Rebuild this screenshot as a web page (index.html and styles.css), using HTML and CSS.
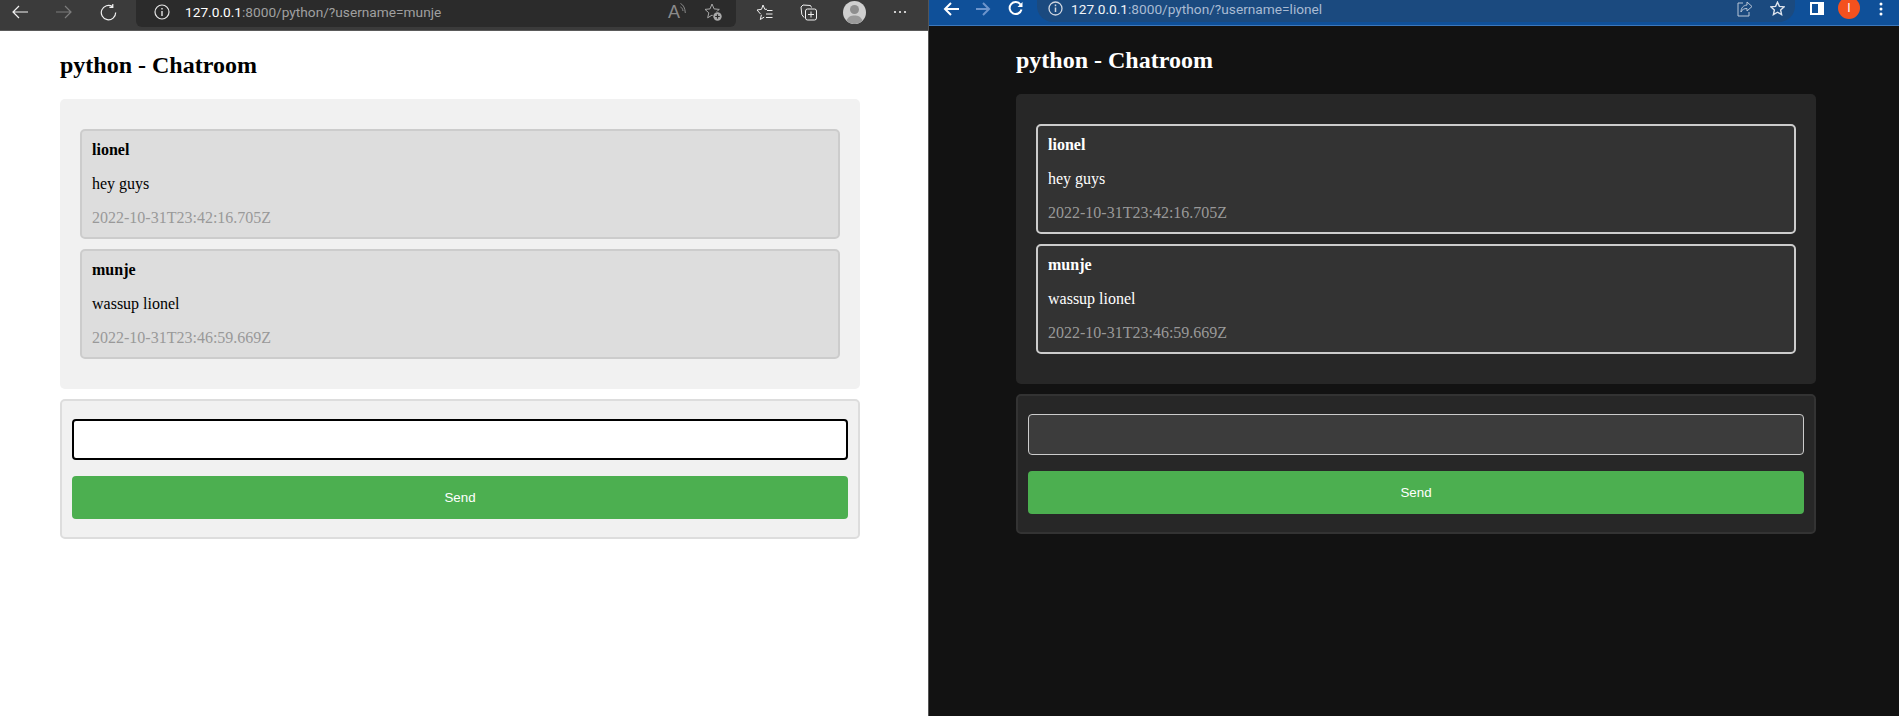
FILE: index.html
```html
<!DOCTYPE html><html><head><meta charset="utf-8">
<title>python - Chatroom</title>
<link rel="stylesheet" href="styles.css">
</head>
<body>

<div class="screen">

<!-- left window, light -->
<div class="pane light">
	<div class="bar">
		<div class="tool"><svg width="16" height="14" viewBox="0 0 16 14"><path d="M16 7H1M7 1L1 7l6 6" fill="none" stroke="#f2f2f2" stroke-width="1.2"/></svg></div>
		<div class="tool"><svg width="16" height="14" viewBox="0 0 16 14"><path d="M0 7h15M9 1l6 6-6 6" fill="none" stroke="#7d7d7d" stroke-width="1.2"/></svg></div>
		<div class="tool"><svg width="17" height="17" viewBox="0 0 17 17"><path d="M12.5 2.600A7.200 7.200 0 1 0 15.700 8.500M12.800 0v3.400H9.400" fill="none" stroke="#f0f0f0" stroke-width="1.2"/></svg></div>
		<div class="addr">
			<div class="info"><svg width="16" height="16" viewBox="0 0 16 16"><circle cx="8" cy="8" r="7" fill="none" stroke="#e6e6e6" stroke-width="1.2"/><path d="M8 7v5M8 4v1.600" stroke="#e6e6e6" stroke-width="1.400"/></svg></div>
			<div class="url"><b>127.0.0.1</b>:8000/python/?username=munje</div>
			<div class="addr-tools">
				<div class="mini"><span class="aloud">A</span><svg class="waves" width="6" height="11" viewBox="0 0 6 11"><path d="M0.500 0.500C3.500 2 5 5 5.300 10M0.500 4C2 4.800 2.800 6 3 8" fill="none" stroke="#8a8a8a"/></svg></div>
				<div class="mini"><svg width="18" height="18" viewBox="0 0 18 18"><path d="M8 1l2.100 4.900 5.200.5-3.900 3.400 1.100 5-4.500-2.700-4.300 2.700 1.100-5L1 6.400l5-.5z" fill="none" stroke="#a8a8a8" stroke-linejoin="round"/><circle cx="13.500" cy="13.500" r="5" fill="#2b2b2b"/><circle cx="13.500" cy="13.500" r="4.200" fill="#a8a8a8"/><path d="M13.500 11.200v4.600M11.200 13.500h4.600" stroke="#2b2b2b" stroke-width="1.200"/></svg></div>
			</div>
		</div>
		<div class="tool"><svg width="17" height="16" viewBox="0 0 17 16"><path d="M7 1l1.800 4.300H11M5.400 10.800L4.300 15.500l3.900-2.400M4.600 10.100L1 6l4.500-.7L7 1" fill="none" stroke="#f0f0f0"/><path d="M11 6.500h5.500M10 10h6.500M10 13.500h6.500" stroke="#f0f0f0"/></svg></div>
		<div class="tool"><svg width="17" height="17" viewBox="0 0 17 17"><path d="M11.500 3.500L10.500 1.500 3 1 1 3l.8 7.500L4 13.500" fill="none" stroke="#f0f0f0"/><rect x="5.500" y="5" width="11" height="11" rx="2" fill="none" stroke="#f0f0f0"/><path d="M11 7.500v6M8 10.500h6" stroke="#f0f0f0"/></svg></div>
		<div class="tool face"><svg width="23" height="23" viewBox="0 0 23 23"><circle cx="11.500" cy="11.500" r="11.500" fill="#cfcfcf"/><circle cx="11.500" cy="8.500" r="4.500" fill="#8e8e8e"/><path d="M3.500 19.800C5 15.500 8 14.500 11.500 14.500s6.500 1 8 5.300A11.500 11.500 0 0 1 3.500 19.800z" fill="#9a9a9a"/></svg></div>
		<div class="tool"><svg width="14" height="4" viewBox="0 0 14 4"><circle cx="2" cy="2" r="1.100" fill="#f0f0f0"/><circle cx="7" cy="2" r="1.100" fill="#f0f0f0"/><circle cx="12" cy="2" r="1.100" fill="#f0f0f0"/></svg></div>
	</div>
	<div class="page">
		<h2>python - Chatroom</h2>
		<div class="messages">
			<div class="msg">
				<strong>lionel</strong>
				<p>hey guys</p>
				<span class="time">2022-10-31T23:42:16.705Z</span>
			</div>
			<div class="msg">
				<strong>munje</strong>
				<p>wassup lionel</p>
				<span class="time">2022-10-31T23:46:59.669Z</span>
			</div>
		</div>
		<form class="send">
			<input type="text" class="field">
			<button type="button" class="btn">Send</button>
		</form>
	</div>
</div>

<!-- right window, dark -->
<div class="pane dark">
	<div class="bar">
		<div class="tool"><svg width="16" height="14" viewBox="0 0 16 14"><path d="M16 7H2M8 1L2 7l6 6" fill="none" stroke="#fff" stroke-width="2"/></svg></div>
		<div class="tool"><svg width="15" height="14" viewBox="0 0 15 14"><path d="M0 7h13M7 1l6 6-6 6" fill="none" stroke="#6d95cc" stroke-width="2"/></svg></div>
		<div class="tool"><svg width="15" height="15" viewBox="0 0 15 15"><path d="M12.500 3.500A6 6 0 1 0 13.500 8.500" fill="none" stroke="#fff" stroke-width="2"/><path d="M14.500 1v5h-5z" fill="#fff"/></svg></div>
		<div class="addr">
			<div class="info"><svg width="15" height="15" viewBox="0 0 15 15"><circle cx="7.500" cy="7.500" r="6.500" fill="none" stroke="#cfd6e0" stroke-width="1.300"/><path d="M7.500 6.500v4.500M7.500 3.600v1.600" stroke="#cfd6e0" stroke-width="1.500"/></svg></div>
			<div class="url"><b>127.0.0.1</b>:8000/python/?username=lionel</div>
			<div class="addr-tools">
				<div class="mini"><svg width="16" height="16" viewBox="0 0 16 16"><path d="M6 2H1v13h11v-4" fill="none" stroke="#b9c6d8"/><path d="M10 1l5 4.500-5 4.500V7.500C7 7.500 5 8.500 4 11c0-4 2-6.500 6-7z" fill="none" stroke="#b9c6d8"/></svg></div>
				<div class="mini"><svg width="15" height="15" viewBox="0 0 15 15"><path d="M7.500 1.200l1.900 4.200 4.600.5-3.400 3.100 1 4.500-4.100-2.300-4.100 2.300 1-4.500L1 5.900l4.600-.5z" fill="none" stroke="#dfe5ee" stroke-width="1.400"/></svg></div>
			</div>
		</div>
		<div class="tool"><svg width="14" height="13" viewBox="0 0 14 13"><rect width="14" height="13" fill="#fff"/><rect x="2" y="2" width="6" height="9" fill="#0f5099"/></svg></div>
		<div class="tool"><div class="avatar">l</div></div>
		<div class="tool"><svg width="4" height="14" viewBox="0 0 4 14"><circle cx="2" cy="2" r="1.500" fill="#fff"/><circle cx="2" cy="7" r="1.500" fill="#fff"/><circle cx="2" cy="12" r="1.500" fill="#fff"/></svg></div>
	</div>
	<div class="page">
		<h2>python - Chatroom</h2>
		<div class="messages">
			<div class="msg">
				<strong>lionel</strong>
				<p>hey guys</p>
				<span class="time">2022-10-31T23:42:16.705Z</span>
			</div>
			<div class="msg">
				<strong>munje</strong>
				<p>wassup lionel</p>
				<span class="time">2022-10-31T23:46:59.669Z</span>
			</div>
		</div>
		<form class="send">
			<input type="text" class="field">
			<button type="button" class="btn">Send</button>
		</form>
	</div>
</div>

</div>

</body>
</html>
```

FILE: styles.css
```css
body {
	margin: 0;
	overflow: hidden;
	font-family: "Liberation Serif", serif;
	font-size: 16px;
}
.screen {
	display: flex;
	height: 716px;
}
.pane {
	display: flex;
	flex-direction: column;
	flex: none;
}
.light {
	width: 929px;
	box-sizing: border-box;
	border-right: 1px solid #555;
	background-color: #fff;
	color: #000;
}
.dark {
	width: 970px;
	background-color: #121212;
	color: #fff;
}

/* browser bars */
.bar {
	display: flex;
	align-items: flex-start;
	flex: none;
	box-sizing: border-box;
}
.tool {
	display: flex;
	align-items: center;
	justify-content: center;
	flex: none;
}
.addr {
	display: flex;
	align-items: center;
	flex: 1;
	min-width: 0;
}
.url {
	font-family: Roboto, sans-serif;
	font-size: 13.7px;
	white-space: nowrap;
}
.url b {
	font-weight: 400;
}
.addr-tools {
	display: flex;
	align-items: center;
	margin-left: auto;
}
.mini {
	display: flex;
	align-items: center;
	justify-content: center;
	width: 20px;
}
.info {
	display: flex;
	justify-content: center;
	flex: none;
}

.light .bar {
	height: 31px;
	gap: 4px;
	padding-right: 8px;
	background-color: #3b3b3b;
	border-bottom: 1px solid #5a5a5a;
}
.light .tool {
	width: 40px;
	height: 24px;
}
.light .face {
	margin: 0 2px;
}
.light .addr {
	height: 27px;
	margin: 0 4px;
	padding: 0 13px 0 16px;
	background-color: #2b2b2b;
	border-radius: 0 0 6px 6px;
}
.light .info {
	width: 20px;
	margin-right: 13px;
	margin-top: -3px;
}
.light .url {
	margin-top: -3px;
	color: #a0a0a0;
}
.light .url b {
	color: #fff;
}
.light .addr-tools {
	gap: 16px;
	margin-top: -3px;
}
.aloud {
	font-family: "Liberation Sans", sans-serif;
	font-size: 18px;
	line-height: 18px;
	color: #8a8a8a;
}
.waves {
	margin-top: -8px;
}

.dark .bar {
	height: 26px;
	gap: 4px;
	padding: 0 4px 0 8px;
	background-color: #0f5099;
	border-bottom: 1px solid #3c78bd;
}
.dark .tool {
	width: 28px;
	height: 17px;
}
.dark .addr {
	height: 22px;
	margin: 0 4px;
	padding: 0 8px 0 10px;
	background-color: #1b4a7f;
	border-radius: 0 0 16px 16px;
}
.dark .addr > .info {
	margin-top: -5px;
	width: 16px;
	margin-right: 8px;
}
.dark .url {
	margin-top: -5px;
	color: #a9bbd3;
}
.dark .url b {
	color: #f1f4f8;
}
.dark .addr-tools {
	gap: 12px;
	margin-top: -5px;
}
.avatar {
	width: 22px;
	height: 22px;
	flex: none;
	margin-top: -1px;
	border-radius: 50%;
	background-color: #f4511e;
	color: #fff;
	font-family: "Liberation Sans", sans-serif;
	font-size: 13px;
	line-height: 22px;
	text-align: center;
}

/* chat page */
.page {
	width: 800px;
}
.light .page {
	margin-left: 60px;
}
.dark .page {
	margin-left: 87px;
}
h2 {
	margin: 20px 0;
	font-size: 24px;
	line-height: 28px;
}
.messages {
	padding: 20px;
	margin-bottom: 10px;
	border-radius: 5px;
}
.msg {
	margin: 10px 0;
	padding: 10px;
	border: 2px solid;
	border-radius: 5px;
	line-height: 18px;
}
.msg strong {
	display: block;
}
.msg p {
	margin: 16px 0;
}
.time {
	display: block;
}
.send {
	box-sizing: border-box;
	display: flex;
	flex-direction: column;
	gap: 16px;
	height: 140px;
	padding: 18px 10px;
	border: 2px solid;
	border-radius: 5px;
}
.field {
	box-sizing: border-box;
	height: 41px;
	width: 100%;
	margin: 0;
	outline: none;
	flex: none;
}
.btn {
	height: 43px;
	width: 100%;
	border: none;
	border-radius: 4px;
	background-color: #4caf50;
	color: #fff;
	font-family: "Liberation Sans", sans-serif;
	font-size: 13.33px;
}

.light .messages {
	background-color: #f1f1f1;
}
.light .msg {
	background-color: #ddd;
	border-color: #ccc;
}
.light .time {
	color: #999;
}
.light .send {
	background-color: #f1f1f1;
	border-color: #ddd;
}
.light .field {
	background-color: #fff;
	border: 2px solid #000;
	border-radius: 4px;
}

.dark .messages {
	background-color: #272727;
}
.dark .msg {
	background-color: #333;
	border-color: #ccc;
}
.dark .time {
	color: #999;
}
.dark .send {
	background-color: #272727;
	border-color: #333;
}
.dark .field {
	background-color: #3c3c3c;
	border: 1px solid #ccc;
	border-radius: 4px;
}
```
